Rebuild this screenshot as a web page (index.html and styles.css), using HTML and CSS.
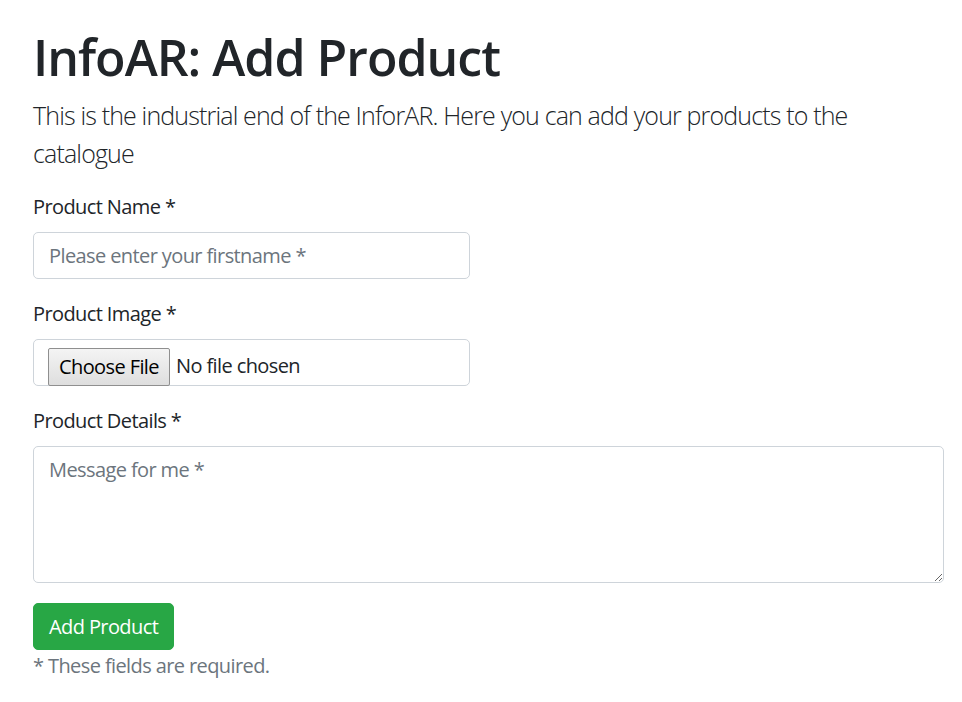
FILE: index.html
```html
<!DOCTYPE html>
<html lang="en">
<head>
<meta charset="utf-8">
<title>InfoAR: Add Product</title>
<link rel="stylesheet" href="styles.css">
</head>
<body>
<main class="page">
  <h1 class="title">InfoAR: Add Product</h1>
  <p class="lead">This is the industrial end of the InforAR. Here you can add your products to the catalogue</p>
  <form class="form">
    <div class="group">
      <label class="label" for="name">Product Name *</label>
      <input class="control half" id="name" type="text" placeholder="Please enter your firstname *">
    </div>
    <div class="group">
      <label class="label">Product Image *</label>
      <div class="control half file">
        <button type="button" class="file-btn">Choose File</button>
        <span class="file-text">No file chosen</span>
      </div>
    </div>
    <div class="group">
      <label class="label" for="details">Product Details *</label>
      <textarea class="control area" id="details" rows="4" placeholder="Message for me *"></textarea>
    </div>
    <button type="button" class="btn-success">Add Product</button>
    <p class="muted">* These fields are required.</p>
  </form>
</main>
</body>
</html>
```
FILE: styles.css
```css
* { box-sizing: border-box; }
html, body { margin: 0; padding: 0; background: #fff; }
body {
  font-family: "Open Sans", "Noto Sans", sans-serif;
  font-size: 20px;
  line-height: 1.5;
  color: #212529;
  letter-spacing: -0.03em;
}
.page {
  padding: 27px 18px 0 33px;
}
.title {
  margin: 0 0 10px;
  font-size: 50px;
  line-height: 1.2;
  font-weight: 600;
  letter-spacing: -0.02em;
}
.lead {
  margin: 0 0 20px;
  max-width: 880px;
  font-size: 25px;
  font-weight: 300;
  line-height: 1.5;
  letter-spacing: -0.034em;
}
.group { margin-bottom: 20px; }
.label {
  display: inline-block;
  margin-bottom: 10px;
}
.control {
  display: block;
  width: 100%;
  font: inherit;
  letter-spacing: inherit;
  color: #495057;
  background: #fff;
  border: 1px solid #ced4da;
  border-radius: 5px;
  padding: 7.5px 15px;
  height: 47px;
  line-height: 1.5;
  outline: none;
}
.control::placeholder { color: #6c757d; opacity: 1; }
.half { width: 437px; }
.file {
  display: flex;
  align-items: center;
  padding: 7px 14px 0;
  height: 47px;
}
.file-btn {
  font: inherit;
  letter-spacing: inherit;
  font-size: 20px;
  line-height: 1;
  color: #000;
  height: 38px;
  padding: 0 10px;
  margin-bottom: -1px;
  background: linear-gradient(#f4f4f4, #dedede);
  border: 1px solid #8f8f8f;
  border-radius: 2px;
}
.file-text {
  margin-left: 6px;
  color: #212529;
}
.area {
  height: 137px;
  resize: vertical;
}
.btn-success {
  display: inline-block;
  font: inherit;
  letter-spacing: inherit;
  color: #fff;
  background: #28a745;
  border: 1px solid #28a745;
  border-radius: 5px;
  padding: 7.5px 15px;
  line-height: 1.5;
  height: 47px;
}
.muted {
  margin: 0;
  padding-top: 1px;
  color: #6c757d;
}
```
